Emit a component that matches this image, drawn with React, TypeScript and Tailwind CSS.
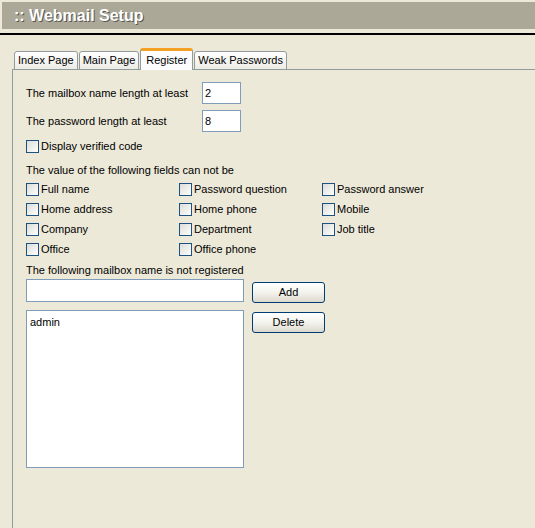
import React from "react";

const FIELDS: string[][] = [
  ["Full name", "Password question", "Password answer"],
  ["Home address", "Home phone", "Mobile"],
  ["Company", "Department", "Job title"],
  ["Office", "Office phone"],
];

const TABS = ["Index Page", "Main Page", "Register", "Weak Passwords"];

function Check({ label }: { label: string }) {
  return (
    <label className="flex items-center gap-[2px] h-[20px]">
      <span className="w-[13px] h-[13px] border border-[#1c5180] bg-gradient-to-br from-[#dcdcd7] to-white" />
      <span>{label}</span>
    </label>
  );
}

function XpButton({ children }: { children: React.ReactNode }) {
  return (
    <button className="w-[73px] h-[21px] rounded-[3px] border border-[#003c74] bg-gradient-to-b from-white via-[#f3f3ee] to-[#dcd8cc] text-[11px] leading-none text-black">
      {children}
    </button>
  );
}

export default function App() {
  return (
    <div className="w-[535px] h-[528px] bg-[#ece9d8] overflow-hidden text-[11px] text-black font-['Liberation_Sans',Arial,sans-serif] flex flex-col">
      {/* Title bar */}
      <div className="mt-[2px] ml-[2px] h-[27px] bg-[#aba898] flex items-center pl-[12px] text-white font-bold text-[16px] [text-shadow:1px_1px_0_#5a5850]">
        :: Webmail Setup
      </div>
      <div className="mt-[4px] h-[2px] bg-black" />

      {/* Tabs */}
      <div className="mt-[14px] flex pl-[14px] items-end h-[21px] relative z-10 -mb-px">
        {TABS.map((t) => {
          const active = t === "Register";
          return active ? (
            <div
              key={t}
              className="h-[22px] px-[5px] mr-[1px] bg-[#fcfcfe] border border-[#919b9c] border-b-0 border-t-[3px] border-t-[#f3a023] rounded-t-[3px] flex items-center"
            >
              {t}
            </div>
          ) : (
            <div
              key={t}
              className="h-[19px] px-[3px] mr-[1px] bg-gradient-to-b from-white to-[#ecebe6] border border-[#919b9c] rounded-t-[3px] flex items-center"
            >
              {t}
            </div>
          );
        })}
      </div>

      {/* Panel */}
      <div className="ml-[12px] flex-1 border-l border-t border-[#919b9c] pt-[12px] pl-[13px]">
        <div className="flex items-center h-[22px]">
          <span className="w-[176px]">The mailbox name length at least</span>
          <input
            defaultValue="2"
            className="w-[39px] h-[22px] border border-[#7f9db9] bg-white px-[2px] outline-none"
          />
        </div>
        <div className="flex items-center h-[22px] mt-[6px]">
          <span className="w-[176px]">The password length at least</span>
          <input
            defaultValue="8"
            className="w-[39px] h-[22px] border border-[#7f9db9] bg-white px-[2px] outline-none"
          />
        </div>
        <div className="mt-[4px]">
          <Check label="Display verified code" />
        </div>
        <div className="mt-[7px] h-[14px] leading-[14px]">The value of the following fields can not be</div>
        <div className="mt-[2px] flex flex-col">
          {FIELDS.map((row, i) => (
            <div key={i} className="flex">
              {row.map((f, j) => (
                <div key={f} className={j === 0 ? "w-[153px]" : j === 1 ? "w-[143px]" : ""}>
                  <Check label={f} />
                </div>
              ))}
            </div>
          ))}
        </div>
        <div className="mt-[4px] h-[14px] leading-[14px]">The following mailbox name is not registered</div>
        <div className="mt-[2px] flex items-start gap-[8px]">
          <input className="w-[218px] h-[23px] border border-[#7f9db9] bg-white outline-none" />
          <div className="mt-[3px]">
            <XpButton>Add</XpButton>
          </div>
        </div>
        <div className="mt-[7px] flex items-start gap-[8px]">
          <div className="w-[218px] h-[158px] border border-[#7f9db9] bg-white px-[3px] pt-[3px]">admin</div>
          <div className="mt-[2px]">
            <XpButton>Delete</XpButton>
          </div>
        </div>
      </div>
    </div>
  );
}
